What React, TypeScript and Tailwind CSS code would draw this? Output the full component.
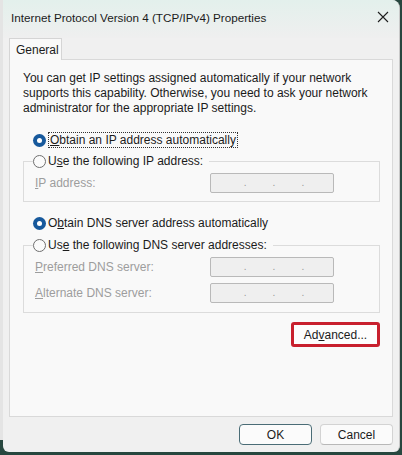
import type { ReactNode } from 'react';

const font = { fontFamily: '"Liberation Sans", Arial, sans-serif' };

function Radio({ checked }: { checked?: boolean }) {
  return checked ? (
    <span className="flex h-[13px] w-[13px] shrink-0 items-center justify-center rounded-full bg-[#17599c]">
      <span className="h-[5px] w-[5px] rounded-full bg-white" />
    </span>
  ) : (
    <span className="h-[13px] w-[13px] shrink-0 rounded-full border border-[#6f6f6f] bg-[#fbfbfb]" />
  );
}

function IpInput() {
  return (
    <div className="flex h-[20px] w-[124px] items-center justify-center gap-[26px] rounded-[2px] border border-[#b9b9b9] bg-[#efefef] pl-[4px] text-[10px] leading-none text-[#9a9a9a]">
      <span>.</span>
      <span>.</span>
      <span>.</span>
    </div>
  );
}

function Field({ u, rest }: { u: string; rest: string }) {
  return (
    <div className="flex items-center">
      <span className="w-[186px] pl-[11px] text-[12px] text-[#9d9d9d]">
        <span className="underline">{u}</span>
        {rest}
      </span>
      <IpInput />
    </div>
  );
}

function Option({ checked, children }: { checked?: boolean; children: ReactNode }) {
  return (
    <div className="flex h-[16px] items-center gap-[2px] pl-[10px] text-[12px] text-[#1b1b1b]">
      <Radio checked={checked} />
      {children}
    </div>
  );
}

export default function App() {
  return (
    <div className="flex h-[455px] w-[402px] bg-[#27473f]" style={font}>
      <div className="h-[440px] w-[3px] bg-[#e4e4e4]" />
      <div className="flex h-[452px] w-[397px] flex-col overflow-hidden rounded-tr-[8px] rounded-b-[6px] border-r border-[#c9c9c9] bg-[#f0f0f0]">
        {/* Title bar */}
        <div className="flex h-[38px] shrink-0 items-start justify-between bg-gradient-to-b from-[#e3f0ec] to-[#efefef] pl-[8px] pr-[10px] pt-[9px]">
          <span className="text-[11.7px] text-[#1b1b1b]">Internet Protocol Version 4 (TCP/IPv4) Properties</span>
          <svg width="12" height="12" viewBox="0 0 12 12" className="mt-[2px]">
            <path d="M1 1 L11 11 M11 1 L1 11" stroke="#1f1f1f" strokeWidth="1.1" />
          </svg>
        </div>

        {/* Tab */}
        <div className="ml-[6px] flex">
          <div className="relative z-10 -mb-px flex h-[22px] w-[53px] items-center border border-b-0 border-[#d5d5d5] bg-[#f9f9f9] pl-[6px] text-[12px] text-[#1b1b1b]">
            General
          </div>
        </div>

        {/* Panel */}
        <div className="ml-[6px] h-[358px] w-[384px] border border-[#d9d9d9] bg-[#f9f9f9] pl-[13px] pr-[12px] pt-[11px]">
          <p className="text-[12px] leading-[15px] text-[#1b1b1b]">
            You can get IP settings assigned automatically if your network
            <br />
            supports this capability. Otherwise, you need to ask your network
            <br />
            administrator for the appropriate IP settings.
          </p>

          <div className="mt-[16px]">
            <Option checked>
              <span className="border border-dotted border-[#333] px-[1px] leading-[14px]">
                <span className="underline">O</span>btain an IP address automatically
              </span>
            </Option>
          </div>

          <fieldset className="mt-[5px] h-[49px] border border-[#dcdcdc]">
            <legend className="ml-[9px] bg-[#f9f9f9] pr-[6px]">
              <div className="flex h-[16px] items-center gap-[2px] text-[12px] text-[#1b1b1b]">
                <Radio />
                <span>
                  U<span className="underline">s</span>e the following IP address:
                </span>
              </div>
            </legend>
            <div className="mt-[4px]">
              <Field u="I" rest="P address:" />
            </div>
          </fieldset>

          <div className="mt-[13px]">
            <Option checked>
              <span>
                O<span className="underline">b</span>tain DNS server address automatically
              </span>
            </Option>
          </div>

          <fieldset className="mt-[6px] h-[76px] border border-[#dcdcdc]">
            <legend className="ml-[9px] bg-[#f9f9f9] pr-[6px]">
              <div className="flex h-[16px] items-center gap-[2px] text-[12px] text-[#1b1b1b]">
                <Radio />
                <span>
                  Us<span className="underline">e</span> the following DNS server addresses:
                </span>
              </div>
            </legend>
            <div className="mt-[4px] flex flex-col gap-[6px]">
              <Field u="P" rest="referred DNS server:" />
              <Field u="A" rest="lternate DNS server:" />
            </div>
          </fieldset>

          <div className="mt-[9px] flex justify-end">
            <div className="flex h-[25px] w-[89px] items-center justify-center rounded-[3px] border-[3px] border-[#c8202e] bg-[#fdfdfd] text-[12px] text-[#1b1b1b]">
              Ad<span className="underline">v</span>anced...
            </div>
          </div>
        </div>

        {/* Footer */}
        <div className="flex justify-end gap-[8px] pr-[6px] pt-[7px]">
          <button className="h-[21px] w-[73px] rounded-[4px] border border-[#4a6c76] bg-[#fbfbfb] text-[12px] text-[#1b1b1b]">
            OK
          </button>
          <button className="h-[21px] w-[73px] rounded-[4px] border border-[#d3d3d3] border-b-[#b8b8b8] bg-[#fbfbfb] text-[12px] text-[#1b1b1b]">
            Cancel
          </button>
        </div>
      </div>
    </div>
  );
}
